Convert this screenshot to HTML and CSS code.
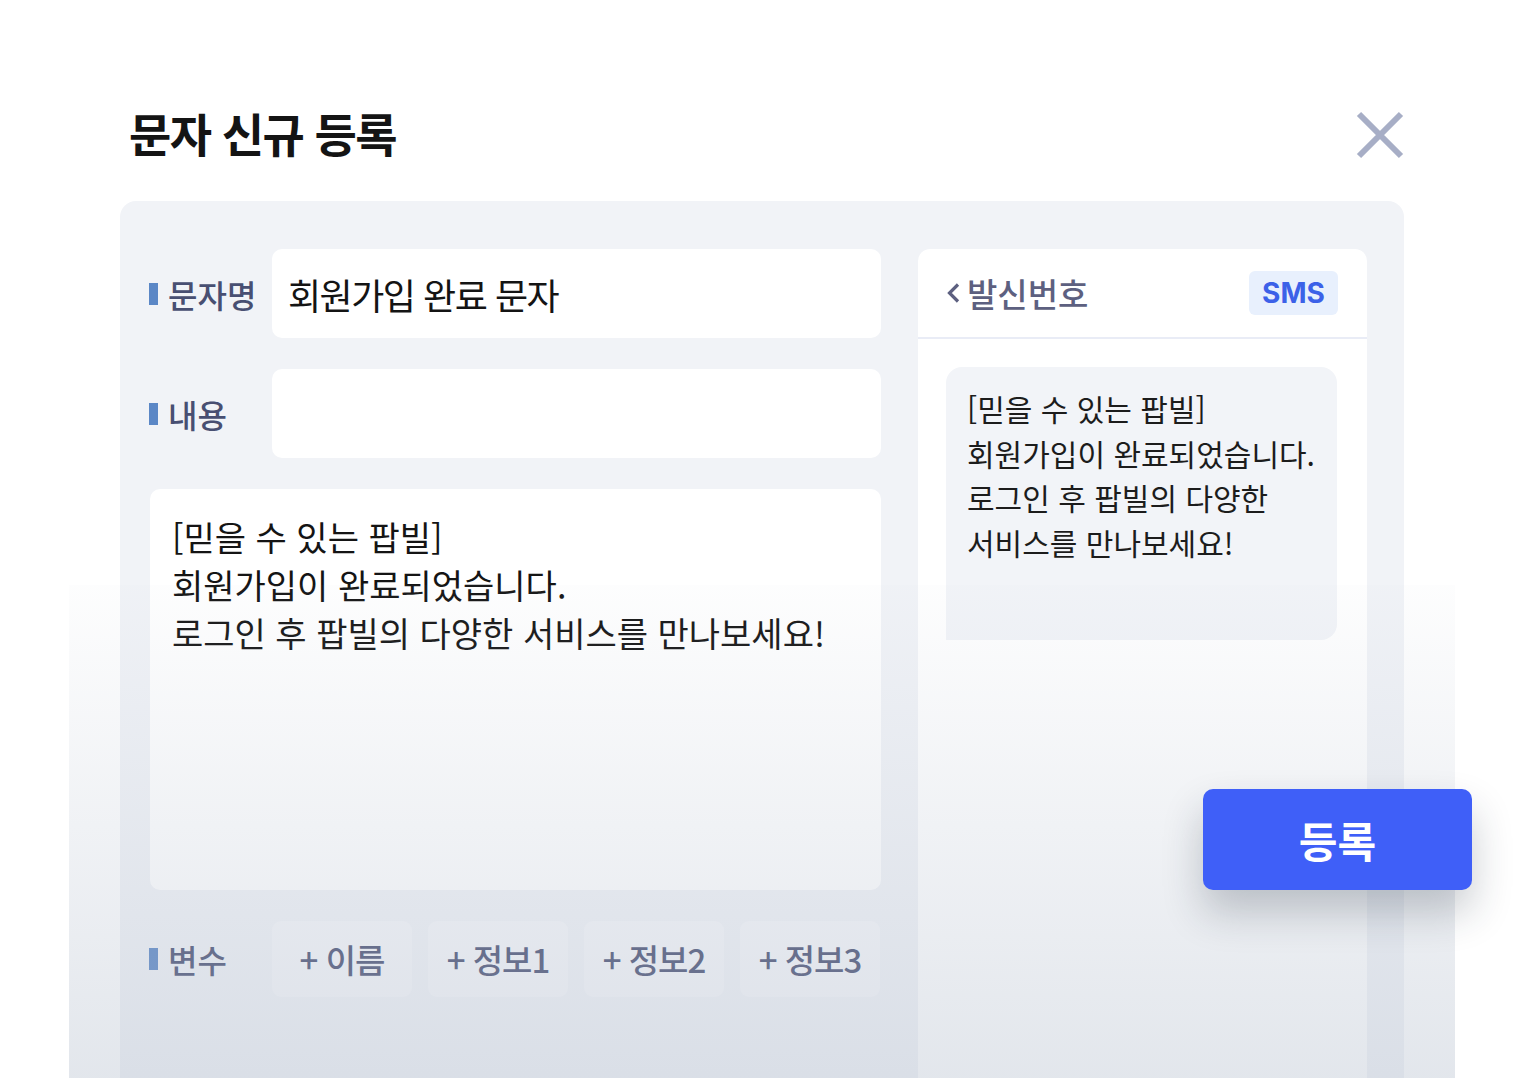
FILE: index.html
```html
<!DOCTYPE html>
<html lang="ko">
<head>
<meta charset="utf-8">
<title>문자 신규 등록</title>
<link rel="stylesheet" href="styles.css">
</head>
<body>
<div class="page">
  <header class="header">
    <h1 class="title">문자 신규 등록</h1>
    <button class="close" aria-label="닫기">
      <svg width="48" height="48" viewBox="0 0 48 48"><path d="M3 3 L45 45 M45 3 L3 45" stroke="#a7aec6" stroke-width="6" fill="none"/></svg>
    </button>
  </header>
  <section class="panel">
    <div class="form">
      <div class="row">
        <div class="label"><span class="bar"></span>문자명</div>
        <div class="field field-text">회원가입 완료 문자</div>
      </div>
      <div class="row">
        <div class="label"><span class="bar"></span>내용</div>
        <div class="field"></div>
      </div>
      <div class="textarea">[믿을 수 있는 팝빌]<br>회원가입이 완료되었습니다.<br>로그인 후 팝빌의 다양한 서비스를 만나보세요!</div>
      <div class="row vars">
        <div class="label"><span class="bar"></span>변수</div>
        <div class="chips">
          <div class="chip">+ 이름</div>
          <div class="chip">+ 정보1</div>
          <div class="chip">+ 정보2</div>
          <div class="chip">+ 정보3</div>
        </div>
      </div>
    </div>
    <div class="phone">
      <div class="phone-head">
        <div class="sender">
          <svg class="chev" width="16" height="24" viewBox="0 0 16 24"><path d="M13 3.5 L4.5 12 L13 20.5" stroke="#5d6080" stroke-width="3.2" fill="none"/></svg>
          <span>발신번호</span>
        </div>
        <div class="badge">SMS</div>
      </div>
      <div class="bubble">[믿을 수 있는 팝빌]<br>회원가입이 완료되었습니다.<br>로그인 후 팝빌의 다양한<br>서비스를 만나보세요!</div>
    </div>
  </section>
  <div class="fade"></div>
  <button class="submit">등록</button>
</div>
</body>
</html>
```
FILE: styles.css
```css
html, body {
  margin: 0;
  padding: 0;
  background: #ffffff;
}
body {
  width: 1524px;
  height: 1080px;
  overflow: hidden;
  font-family: "Noto Sans CJK KR", "Noto Sans", sans-serif;
  color: #161616;
}
.page {
  position: relative;
  width: 1524px;
  height: 1080px;
  padding: 85px 120px 0;
  box-sizing: border-box;
}
.header {
  display: flex;
  align-items: center;
  justify-content: space-between;
  height: 96px;
  margin-bottom: 20px;
  padding-left: 9px;
}
.title {
  margin: 0 0 3px;
  font-size: 46px;
  font-weight: 700;
  letter-spacing: -1.6px;
  color: #141414;
}
.close {
  border: 0;
  background: none;
  padding: 0;
  width: 48px;
  height: 48px;
  margin-top: 4px;
}
.close svg { display: block; }
.panel {
  display: flex;
  gap: 37px;
  height: 877px;
  background: #f1f3f7;
  border-radius: 16px 16px 0 0;
  padding: 48px 37px 0 30px;
  box-sizing: border-box;
}
.form {
  width: 731px;
  display: flex;
  flex-direction: column;
  gap: 31px;
}
.row {
  display: flex;
  align-items: center;
  height: 89px;
}
.label {
  width: 123px;
  flex: none;
  display: flex;
  align-items: center;
  font-size: 32px;
  font-weight: 500;
  color: #484f72;
  margin-left: -1px;
}
.bar {
  width: 9px;
  height: 22px;
  background: #5b87c6;
  margin-right: 10px;
  flex: none;
}
.field {
  flex: 1;
  height: 89px;
  background: #ffffff;
  border-radius: 10px;
  display: flex;
  align-items: center;
  padding-left: 16px;
  box-sizing: border-box;
}
.field-text {
  font-size: 36px;
  letter-spacing: -1.5px;
  color: #141414;
}
.textarea {
  height: 401px;
  background: #ffffff;
  border-radius: 10px;
  padding: 24px 22px;
  box-sizing: border-box;
  font-size: 34px;
  line-height: 48px;
  letter-spacing: 0;
  color: #141414;
}
.vars {
  height: 76px;
}
.chips {
  display: flex;
  gap: 16px;
  flex: 1;
}
.chip {
  width: 140px;
  height: 76px;
  border-radius: 9px;
  background: #f6f7fa;
  display: flex;
  align-items: center;
  justify-content: center;
  font-size: 33px;
  font-weight: 500;
  color: #484f72;
  letter-spacing: -1px;
}
.phone {
  width: 449px;
  background: #ffffff;
  border-radius: 12px 12px 0 0;
}
.phone-head {
  height: 88px;
  border-bottom: 2px solid #e9ecf6;
  display: flex;
  align-items: center;
  justify-content: space-between;
  padding: 0 29px 0 27px;
}
.sender {
  display: flex;
  align-items: center;
  gap: 6px;
  font-size: 33px;
  font-weight: 500;
  color: #5d6080;
}
.chev { display: block; }
.badge {
  width: 89px;
  height: 44px;
  border-radius: 6px;
  background: #e8f0fd;
  color: #3c61e8;
  font-family: "Inter", "Liberation Sans", sans-serif;
  font-weight: 700;
  font-size: 28px;
  display: flex;
  align-items: center;
  justify-content: center;
}
.bubble {
  margin: 28px 30px 0 28px;
  height: 273px;
  background: #f2f4f8;
  border-radius: 16px 16px 16px 0;
  padding: 19px 21px;
  box-sizing: border-box;
  font-size: 30px;
  line-height: 44.7px;
  letter-spacing: 0;
  color: #1c1c1c;
}
.fade {
  position: absolute;
  left: 69px;
  top: 585px;
  width: 1386px;
  height: 493px;
  background: linear-gradient(to bottom, rgba(190,198,212,0.03) 0%, rgba(180,190,205,0.38) 100%);
  pointer-events: none;
}
.submit {
  position: absolute;
  left: 1203px;
  top: 789px;
  width: 269px;
  height: 101px;
  border: 0;
  border-radius: 10px;
  background: #3f5ff8;
  color: #ffffff;
  font-family: "Noto Sans CJK KR", sans-serif;
  font-size: 42px;
  font-weight: 700;
  box-shadow: 0 22px 40px rgba(30, 40, 60, 0.24);
}
```
